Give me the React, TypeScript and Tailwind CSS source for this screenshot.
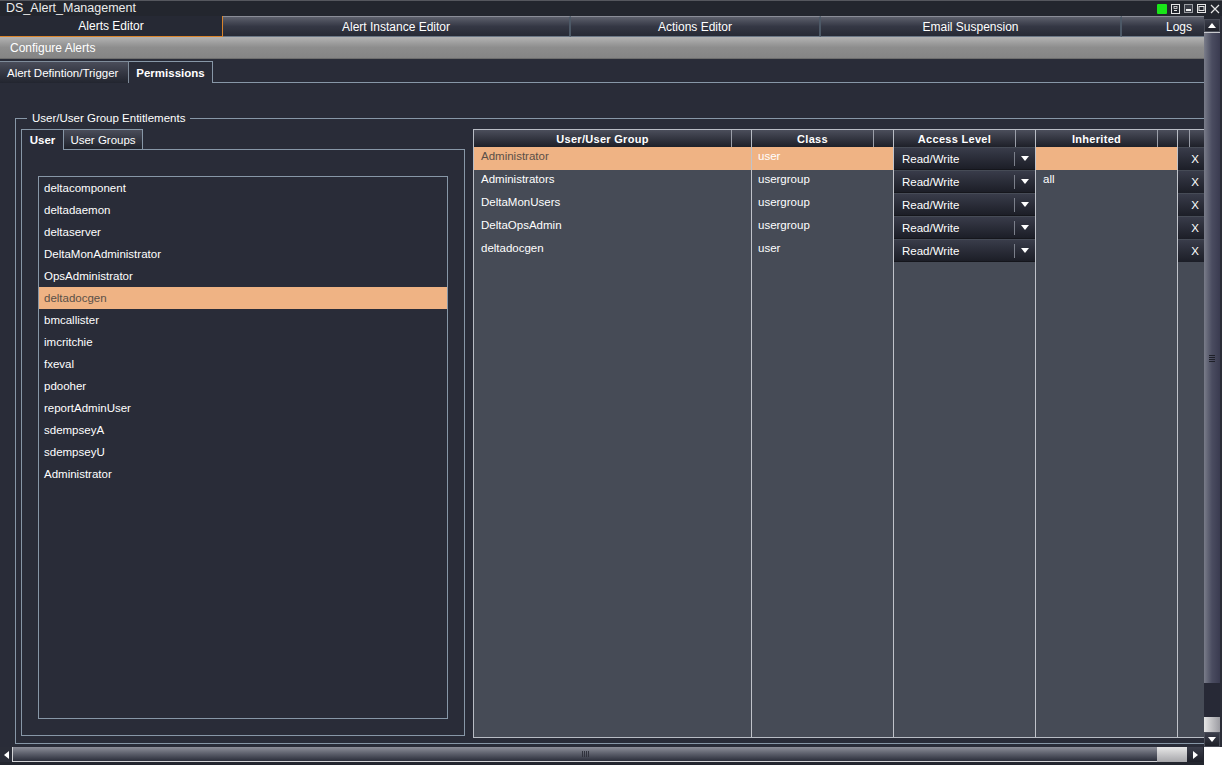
import React from "react";

const users = [
  "deltacomponent",
  "deltadaemon",
  "deltaserver",
  "DeltaMonAdministrator",
  "OpsAdministrator",
  "deltadocgen",
  "bmcallister",
  "imcritchie",
  "fxeval",
  "pdooher",
  "reportAdminUser",
  "sdempseyA",
  "sdempseyU",
  "Administrator",
];

const entitlements = [
  { name: "Administrator", cls: "user", inherited: "", selected: true },
  { name: "Administrators", cls: "usergroup", inherited: "all", selected: false },
  { name: "DeltaMonUsers", cls: "usergroup", inherited: "", selected: false },
  { name: "DeltaOpsAdmin", cls: "usergroup", inherited: "", selected: false },
  { name: "deltadocgen", cls: "user", inherited: "", selected: false },
];

const topTabs = [
  { label: "Alerts Editor", w: "w-[223px]", active: true },
  { label: "Alert Instance Editor", w: "w-[348px]", active: false },
  { label: "Actions Editor", w: "w-[250px]", active: false },
  { label: "Email Suspension", w: "w-[301px]", active: false },
];

function Tri({ dir, className }: { dir: "up" | "down" | "left" | "right"; className?: string }) {
  const pts = {
    up: "0,5 8,5 4,0",
    down: "0,0 8,0 4,5",
    left: "5,0 5,8 0,4",
    right: "0,0 0,8 5,4",
  }[dir];
  const w = dir === "up" || dir === "down" ? 8 : 5;
  const h = dir === "up" || dir === "down" ? 5 : 8;
  return (
    <svg width={w} height={h} viewBox={`0 0 ${w} ${h}`} className={className}>
      <polygon points={pts} fill="currentColor" />
    </svg>
  );
}

function TitleBar() {
  return (
    <div className="h-[16px] flex items-center justify-between bg-[#23262e] border-t border-[#55575e]">
      <span className="pl-[6px] text-[12.5px] leading-[15px] text-[#ececec]">DS_Alert_Management</span>
      <div className="flex items-center gap-[4px] pr-[2px]">
        <div className="w-[10px] h-[10px] bg-[#19e619] rounded-[1px]" />
        <svg width="9" height="10" viewBox="0 0 9 10">
          <rect x="0.5" y="0.5" width="8" height="9" fill="none" stroke="#e6e6e6" />
          <rect x="3" y="2.5" width="3" height="2" fill="none" stroke="#e6e6e6" strokeWidth="0.8" />
          <line x1="3" y1="6.5" x2="6" y2="6.5" stroke="#e6e6e6" />
        </svg>
        <svg width="9" height="9" viewBox="0 0 9 9">
          <rect x="0.5" y="0.5" width="8" height="8" fill="#3a3d46" stroke="#9a9ca2" />
          <rect x="2" y="5" width="5" height="2" fill="#f2f2f2" />
        </svg>
        <svg width="9" height="9" viewBox="0 0 9 9">
          <rect x="0.5" y="0.5" width="8" height="8" fill="none" stroke="#e6e6e6" />
          <rect x="2" y="2.5" width="5" height="4" fill="none" stroke="#e6e6e6" />
        </svg>
        <svg width="10" height="10" viewBox="0 0 10 10">
          <path d="M1 1 L9 9 M9 1 L1 9" stroke="#e6e6e6" strokeWidth="1.2" />
        </svg>
      </div>
    </div>
  );
}

function TopTabs() {
  return (
    <div className="h-[21px] flex text-[12px] text-white">
      {topTabs.map((t) =>
        t.active ? (
          <div
            key={t.label}
            className={`${t.w} flex items-center justify-center bg-[#262934] border-r border-b border-[#d9842c]`}
          >
            {t.label}
          </div>
        ) : (
          <div
            key={t.label}
            className={`${t.w} flex items-center justify-center bg-linear-to-b from-[#5d606c] via-[#343744] to-[#272a35] border-r-2 border-b border-r-[#4c5866] border-b-[#6b7786] border-t border-t-[#8a8d97]`}
          >
            {t.label}
          </div>
        )
      )}
      <div className="flex-1 flex items-center justify-end pr-[12px] bg-linear-to-b from-[#5d606c] via-[#343744] to-[#272a35] border-b border-t border-b-[#6b7786] border-t-[#8a8d97]">
        Logs
      </div>
    </div>
  );
}

function ConfigureBar() {
  return (
    <div className="h-[22px] flex items-center pl-[10px] bg-linear-to-b from-[#b3b3b3] via-[#8d8d8d] to-[#858585] border-b border-[#6e6e6e] text-[12px] text-white">
      Configure Alerts
    </div>
  );
}

function SubTabs() {
  return (
    <div className="h-[24px] flex items-end pt-[2px] text-[11.5px]">
      <div className="h-[22px] w-[129px] flex items-center pl-[7px] bg-linear-to-b from-[#4a4d5a] to-[#22252f] border-t border-r border-[#7f8c9a] text-white">
        Alert Defintion/Trigger
      </div>
      <div className="h-[22px] w-[84px] flex items-center justify-center font-bold border-t border-r border-[#8797a7] text-white">
        Permissions
      </div>
      <div className="flex-1 h-[22px] border-b border-[#8797a7]" />
    </div>
  );
}

function UserPanel() {
  return (
    <div className="w-[444px] flex flex-col">
      <div className="h-[21px] flex items-end">
        <div className="h-[21px] w-[43px] flex items-center justify-center border-l border-t border-r border-[#8797a7] font-bold text-white">
          User
        </div>
        <div className="h-[21px] w-[79px] flex items-center justify-center bg-linear-to-b from-[#4a4d5a] to-[#1f222b] border-t border-r border-b border-[#8797a7] text-white">
          User Groups
        </div>
        <div className="flex-1 h-[21px] border-b border-[#8797a7]" />
      </div>
      <div className="h-[586px] border-l border-r border-b border-[#8797a7] pl-[16px] pr-[16px] pt-[26px] pb-[16px]">
        <div className="h-full border border-[#8797a7] flex flex-col">
          {users.map((u) => (
            <div
              key={u}
              className={`h-[22px] flex items-center pl-[5px] ${
                u === "deltadocgen" ? "bg-[#efb384] text-[#5a5048]" : "text-white"
              }`}
            >
              {u}
            </div>
          ))}
        </div>
      </div>
    </div>
  );
}

function HeaderCell({ label, w, last }: { label: string; w: string; last?: boolean }) {
  return (
    <div className={`${w} h-full flex ${last ? "" : "border-r border-[#b8bcc4]"}`}>
      <div className="flex-1 flex items-center justify-center font-bold text-white">{label}</div>
      <div className="w-[20px] border-l border-[#9a9ea8]" />
    </div>
  );
}

function Dropdown() {
  return (
    <div className="h-[22px] mt-[1px] flex items-center bg-linear-to-b from-[#393c4a] to-[#1c1e27] border-b border-[#15161c] text-white">
      <span className="pl-[8px] flex-1">Read/Write</span>
      <div className="w-[1px] h-[14px] bg-[#7b7f8a]" />
      <div className="w-[20px] flex justify-center">
        <Tri dir="down" className="text-white" />
      </div>
    </div>
  );
}

function EntitlementTable() {
  return (
    <div className="flex-1 ml-[8px] h-[609px] flex flex-col border-t border-l border-b border-[#b8bcc4] bg-[#464b56]">
      <div className="h-[17px] flex bg-linear-to-b from-[#4b4e5b] to-[#1e2029] text-[11px] tracking-[0.3px]">
        <HeaderCell label="User/User Group" w="w-[278px]" />
        <HeaderCell label="Class" w="w-[142px]" />
        <HeaderCell label="Access Level" w="w-[142px]" />
        <HeaderCell label="Inherited" w="w-[142px]" />
        <div className="flex-1 flex">
          <div className="w-[12px] border-r border-[#9a9ea8]" />
        </div>
      </div>
      <div className="flex-1 flex">
        <div className="w-[278px] border-r border-[#c0c3ca] flex flex-col">
          {entitlements.map((e) => (
            <div
              key={e.name}
              className={`h-[23px] pl-[7px] pt-[2px] leading-[14px] ${
                e.selected ? "bg-[#efb384] text-[#5a5048]" : "text-white"
              }`}
            >
              {e.name}
            </div>
          ))}
        </div>
        <div className="w-[142px] border-r border-[#c0c3ca] flex flex-col">
          {entitlements.map((e) => (
            <div
              key={e.name}
              className={`h-[23px] pl-[6px] pt-[2px] leading-[14px] text-white ${
                e.selected ? "bg-[#efb384]" : ""
              }`}
            >
              {e.cls}
            </div>
          ))}
        </div>
        <div className="w-[142px] border-r border-[#c0c3ca] flex flex-col">
          {entitlements.map((e) => (
            <Dropdown key={e.name} />
          ))}
        </div>
        <div className="w-[142px] border-r border-[#c0c3ca] flex flex-col">
          {entitlements.map((e) => (
            <div
              key={e.name}
              className={`h-[23px] pl-[7px] pt-[2px] leading-[14px] text-white ${
                e.selected ? "bg-[#efb384]" : ""
              }`}
            >
              {e.inherited}
            </div>
          ))}
        </div>
        <div className="flex-1 flex flex-col">
          {entitlements.map((e) => (
            <div
              key={e.name}
              className="h-[22px] mt-[1px] flex items-center justify-end pr-[5px] bg-linear-to-b from-[#393c4a] to-[#1c1e27] text-white"
            >
              X
            </div>
          ))}
        </div>
      </div>
    </div>
  );
}

function Entitlements() {
  return (
    <div className="relative mt-[35px] ml-[15px] h-[626px] border-l border-t border-b border-[#8797a7] pl-[5px] pt-[10px] flex items-start">
      <span className="absolute -top-[8px] left-[11px] px-[5px] bg-[#292c38] text-white leading-[14px]">
        User/User Group Entitlements
      </span>
      <UserPanel />
      <EntitlementTable />
    </div>
  );
}

function VScroll() {
  return (
    <div className="w-[16px] flex flex-col bg-[#23262f]">
      <div className="h-[3px]" />
      <div className="h-[13px] flex items-center justify-center bg-linear-to-b from-[#3b3e4b] to-[#1e2029] border border-[#4a4d58]">
        <Tri dir="up" className="text-white" />
      </div>
      <div className="flex-1 flex flex-col border-t border-[#c8c9ce] bg-linear-to-r from-[#7a7d8a] via-[#4a4c60] to-[#3a3b50]">
        <div className="flex-1 flex items-center justify-center">
          <div className="flex flex-col gap-[1px]">
            <div className="w-[6px] h-[1px] bg-[#1e2029]" />
            <div className="w-[6px] h-[1px] bg-[#1e2029]" />
            <div className="w-[6px] h-[1px] bg-[#1e2029]" />
            <div className="w-[6px] h-[1px] bg-[#1e2029]" />
          </div>
        </div>
        <div className="h-[34px] bg-[#272936]" />
        <div className="h-[15px] bg-linear-to-r from-[#e6e6e6] to-[#9c9ca2]" />
      </div>
      <div className="h-[15px] flex items-center justify-center bg-linear-to-b from-[#3b3e4b] to-[#1e2029] border border-[#4a4d58]">
        <Tri dir="down" className="text-white" />
      </div>
    </div>
  );
}

function HScroll() {
  return (
    <div className="h-[18px] flex bg-[#23262f]">
      <div className="flex-1 flex flex-col">
        <div className="h-[15px] flex">
          <div className="w-[12px] flex items-center justify-center bg-[#2a2d38]">
            <Tri dir="left" className="text-white" />
          </div>
          <div className="w-[1145px] flex items-center justify-center border-l border-b border-[#d2d3d6] bg-linear-to-b from-[#8e909a] via-[#5a5d69] to-[#2c2f3b]">
            <div className="flex gap-[1px]">
              <div className="w-[1px] h-[6px] bg-[#30323c]" />
              <div className="w-[1px] h-[6px] bg-[#30323c]" />
              <div className="w-[1px] h-[6px] bg-[#30323c]" />
              <div className="w-[1px] h-[6px] bg-[#30323c]" />
            </div>
          </div>
          <div className="w-[30px] bg-linear-to-b from-[#e8e8e8] to-[#a6a6aa]" />
          <div className="w-[16px] flex items-center justify-center bg-linear-to-b from-[#3b3e4b] to-[#1e2029]">
            <Tri dir="right" className="text-white" />
          </div>
        </div>
      </div>
      <div className="w-[18px] bg-white" />
    </div>
  );
}

export default function App() {
  return (
    <div className="w-[1222px] h-[765px] overflow-hidden flex flex-col bg-[#292c38] text-white text-[11.5px] leading-[14px] [font-family:'Liberation_Sans',Arial,sans-serif]">
      <TitleBar />
      <div className="h-[731px] flex">
        <div className="w-[1204px] flex flex-col">
          <TopTabs />
          <ConfigureBar />
          <SubTabs />
          <Entitlements />
        </div>
        <VScroll />
        <div className="w-[2px] bg-[#2a2c36]" />
      </div>
      <HScroll />
    </div>
  );
}
